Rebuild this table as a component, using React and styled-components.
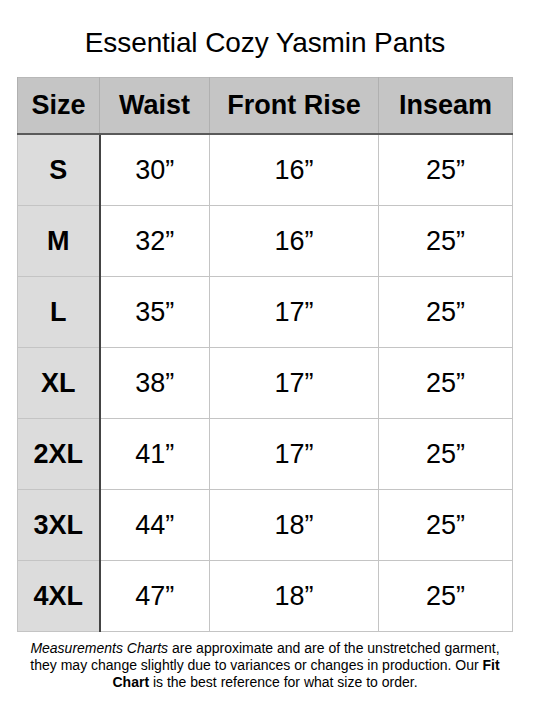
import React from 'react';
import styled, { createGlobalStyle } from 'styled-components';

const GlobalStyle = createGlobalStyle`
  body {
    margin: 0;
    background: #ffffff;
    font-family: "Liberation Sans", Arial, sans-serif;
    color: #000;
  }
`;

const rows = [
  { size: 'S', waist: '30', rise: '16', inseam: '25' },
  { size: 'M', waist: '32', rise: '16', inseam: '25' },
  { size: 'L', waist: '35', rise: '17', inseam: '25' },
  { size: 'XL', waist: '38', rise: '17', inseam: '25' },
  { size: '2XL', waist: '41', rise: '17', inseam: '25' },
  { size: '3XL', waist: '44', rise: '18', inseam: '25' },
  { size: '4XL', waist: '47', rise: '18', inseam: '25' },
];

const Page = styled.div`
  width: 530px;
  display: flex;
  flex-direction: column;
  align-items: center;
  padding-top: 26px;
`;

const Title = styled.h1`
  margin: 0 0 17px;
  font-size: 28px;
  font-weight: 400;
  line-height: 34px;
  letter-spacing: -0.1px;
`;

const Table = styled.table`
  width: 495px;
  border-collapse: collapse;
  table-layout: fixed;
  border: 1px solid #b8b8b8;
`;

const HeadCell = styled.th`
  height: 55px;
  padding: 0;
  background: #c5c5c5;
  font-size: 27px;
  font-weight: 700;
  border-left: 1px solid #b0b0b0;
  border-bottom: 2px solid #5a5a5a;
  text-align: center;
`;

const Cell = styled.td`
  height: 70px;
  padding: 0;
  text-align: center;
  font-size: 27px;
  border: 1px solid #c4c4c4;
`;

const SizeCell = styled(Cell)`
  background: #dcdcdc;
  font-weight: 700;
  border-right: 2px solid #444;
`;

const Note = styled.p`
  margin: 8px 0 0;
  width: 482px;
  text-align: center;
  font-size: 14px;
  line-height: 17px;
`;

export default function App() {
  return (
    <>
      <GlobalStyle />
      <Page>
        <Title>Essential Cozy Yasmin Pants</Title>
        <Table>
          <colgroup>
            <col style={{ width: 82 }} />
            <col style={{ width: 110 }} />
            <col style={{ width: 169 }} />
            <col style={{ width: 134 }} />
          </colgroup>
          <thead>
            <tr>
              <HeadCell>Size</HeadCell>
              <HeadCell>Waist</HeadCell>
              <HeadCell>Front Rise</HeadCell>
              <HeadCell>Inseam</HeadCell>
            </tr>
          </thead>
          <tbody>
            {rows.map((r) => (
              <tr key={r.size}>
                <SizeCell>{r.size}</SizeCell>
                <Cell>{r.waist}”</Cell>
                <Cell>{r.rise}”</Cell>
                <Cell>{r.inseam}”</Cell>
              </tr>
            ))}
          </tbody>
        </Table>
        <Note>
          <i>Measurements Charts</i> are approximate and are of the unstretched garment,
          they may change slightly due to variances or changes in production. Our <b>Fit
          Chart</b> is the best reference for what size to order.
        </Note>
      </Page>
    </>
  );
}
